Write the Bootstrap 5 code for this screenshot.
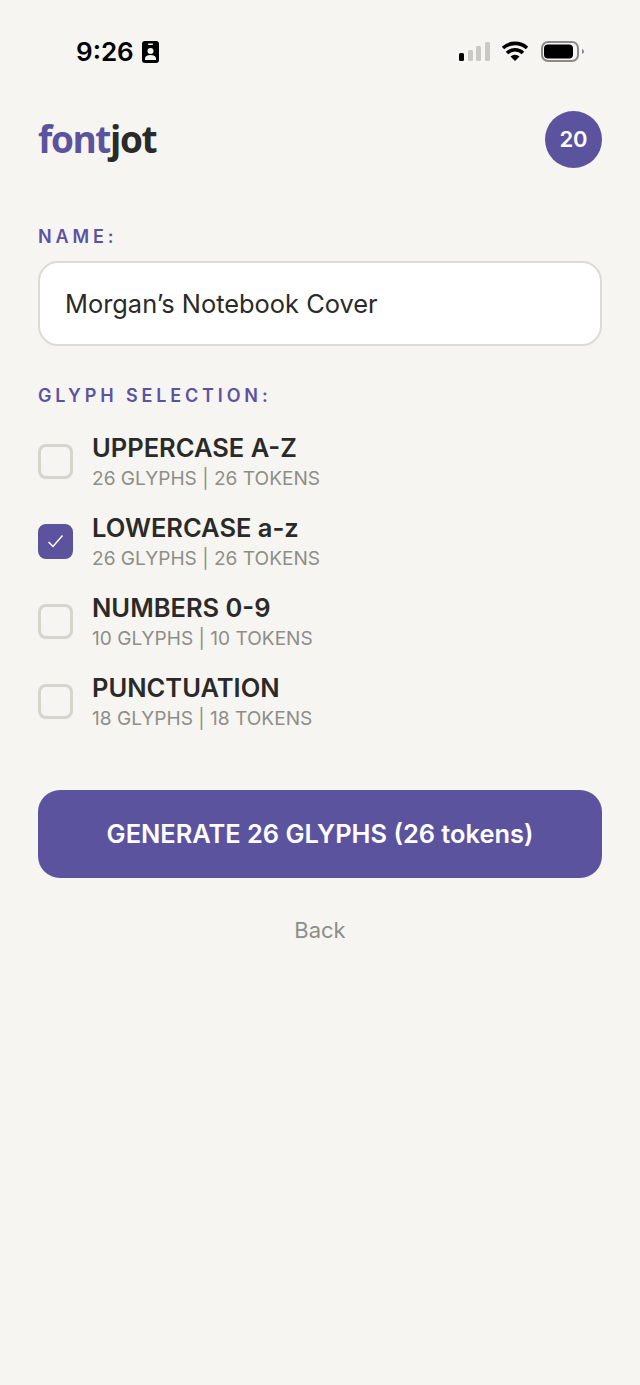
<!DOCTYPE html>
<html lang="en">
<head>
  <meta charset="UTF-8">
  <meta name="viewport" content="width=device-width, initial-scale=1.0">
  <title>fontjot</title>
  <link href="https://cdn.jsdelivr.net/npm/bootstrap@5.3.0/dist/css/bootstrap.min.css" rel="stylesheet">
  <style>
    html, body {
      height: 100%;
    }
    body {
      background-color: #f6f5f2;
      font-family: Inter, "Liberation Sans", sans-serif;
      color: #2a2a28;
    }
    .status-row {
      height: 101px;
      padding: 36px 56px 0 76px;
      align-items: flex-start;
    }
    .status-time {
      font-size: 26px;
      font-weight: 600;
      line-height: 31px;
      color: #000;
    }
    .status-icons {
      margin-top: 5px;
    }
    .page-wrap {
      padding: 0 38px;
    }
    .brand-row {
      height: 76px;
      margin-bottom: 49px;
    }
    .brand-name {
      font-family: "Open Sans", sans-serif;
      font-size: 37px;
      font-weight: 700;
      letter-spacing: -1.4px;
      line-height: 1;
      margin-top: -1px;
      color: #2a2a28;
    }
    .brand-name span {
      color: #5c539f;
    }
    .token-bubble {
      width: 57px;
      height: 57px;
      background-color: #5c539f;
      color: #fff;
      font-size: 22px;
      font-weight: 600;
    }
    .field-label {
      display: block;
      font-size: 18px;
      font-weight: 600;
      letter-spacing: 3.85px;
      line-height: 22px;
      color: #5c539f;
      margin-bottom: 13px;
    }
    .field-label.to-list {
      margin-bottom: 22px;
    }
    .name-input.form-control {
      height: 85px;
      padding: 0 25px;
      font-size: 25.4px;
      color: #2a2a28;
      background-color: #fff;
      border: 2px solid #dcdbd4;
      border-radius: 20px;
      box-shadow: none;
    }
    .name-block {
      margin-bottom: 39px;
    }
    .glyph-list {
      gap: 14px;
      margin-bottom: 55px;
    }
    .glyph-item {
      height: 66px;
      gap: 19px;
    }
    .tick-box {
      width: 35px;
      height: 35px;
      flex-shrink: 0;
      margin-bottom: 2px;
      border: 3px solid #d6d5cd;
      border-radius: 8px;
    }
    .tick-box.is-on {
      background-color: #5c539f;
      border-color: #5c539f;
    }
    .glyph-title {
      font-size: 25.5px;
      font-weight: 600;
      line-height: 31px;
      color: #2a2a28;
    }
    .glyph-sub {
      font-size: 19.1px;
      line-height: 30px;
      color: #8e8e88;
    }
    .generate-btn.btn {
      height: 88px;
      font-size: 25.4px;
      font-weight: 600;
      color: #fff;
      background-color: #5c539f;
      border: 0;
      border-radius: 22px;
    }
    .back-link {
      font-size: 22px;
      line-height: 28px;
      color: #8e8e88;
      margin-top: 38px;
    }
  </style>
</head>
<body>
  <div class="status-row d-flex justify-content-between">
    <div class="d-flex align-items-center gap-2">
      <span class="status-time">9:26</span>
      <svg width="17" height="22" viewBox="0 0 17 22">
        <rect width="17" height="22" rx="3" fill="#000"/>
        <rect x="6" y="2.5" width="5" height="1.5" rx=".7" fill="#f6f5f2"/>
        <circle cx="8.5" cy="10" r="3" fill="#f6f5f2"/>
        <path d="M3 19v-1.5c0-2 2-3.5 5.500-3.500s5.500 1.500 5.500 3.500V19z" fill="#f6f5f2"/>
      </svg>
    </div>
    <svg class="status-icons" width="125" height="22" viewBox="0 0 125 22">
      <rect x="0" y="12" width="5" height="8" rx="1.500" fill="#000"/>
      <rect x="9" y="9" width="5" height="11" rx="1.500" fill="#c9c9c6"/>
      <rect x="17" y="5" width="5" height="15" rx="1.500" fill="#c9c9c6"/>
      <rect x="26" y="1" width="5" height="19" rx="1.500" fill="#c9c9c6"/>
      <path d="M44 7a18 18 0 0 1 24 0" fill="none" stroke="#000" stroke-width="3.600"/>
      <path d="M48 12a11.500 11.500 0 0 1 16 0" fill="none" stroke="#000" stroke-width="3.600"/>
      <path d="M51.500 15.500a7 7 0 0 1 9 0L56 20z" fill="#000"/>
      <rect x="83" y="1" width="36" height="19" rx="6" fill="none" stroke="#8a8a88" stroke-width="2"/>
      <rect x="85" y="3.500" width="29" height="14" rx="4" fill="#000"/>
      <path d="M123 8c1.300.4 2 1.300 2 2.500s-.7 2.100-2 2.500z" fill="#8a8a88"/>
    </svg>
  </div>

  <div class="page-wrap">
    <div class="brand-row d-flex justify-content-between align-items-center">
      <div class="brand-name"><span>font</span>jot</div>
      <div class="token-bubble rounded-circle d-flex align-items-center justify-content-center">20</div>
    </div>

    <div class="name-block">
      <label class="field-label" for="nombre">NAME:</label>
      <input id="nombre" type="text" class="form-control name-input" value="Morgan’s Notebook Cover">
    </div>

    <div class="field-label to-list">GLYPH SELECTION:</div>
    <div class="glyph-list d-flex flex-column">
      <div class="glyph-item d-flex align-items-center">
        <div class="tick-box"></div>
        <div>
          <div class="glyph-title">UPPERCASE A-Z</div>
          <div class="glyph-sub">26 GLYPHS | 26 TOKENS</div>
        </div>
      </div>
      <div class="glyph-item d-flex align-items-center">
        <div class="tick-box is-on d-flex align-items-center justify-content-center">
          <svg width="17" height="14" viewBox="0 0 17 14"><path d="M1.500 8l4.500 4.500L15.500 1.500" fill="none" stroke="#fff" stroke-width="1.500"/></svg>
        </div>
        <div>
          <div class="glyph-title">LOWERCASE a-z</div>
          <div class="glyph-sub">26 GLYPHS | 26 TOKENS</div>
        </div>
      </div>
      <div class="glyph-item d-flex align-items-center">
        <div class="tick-box"></div>
        <div>
          <div class="glyph-title">NUMBERS 0-9</div>
          <div class="glyph-sub">10 GLYPHS | 10 TOKENS</div>
        </div>
      </div>
      <div class="glyph-item d-flex align-items-center">
        <div class="tick-box"></div>
        <div>
          <div class="glyph-title">PUNCTUATION</div>
          <div class="glyph-sub">18 GLYPHS | 18 TOKENS</div>
        </div>
      </div>
    </div>

    <button class="btn generate-btn w-100">GENERATE 26 GLYPHS (26 tokens)</button>
    <div class="back-link text-center">Back</div>
  </div>
  <script src="https://cdn.jsdelivr.net/npm/bootstrap@5.3.0/dist/js/bootstrap.bundle.min.js"></script>
</body>
</html>
